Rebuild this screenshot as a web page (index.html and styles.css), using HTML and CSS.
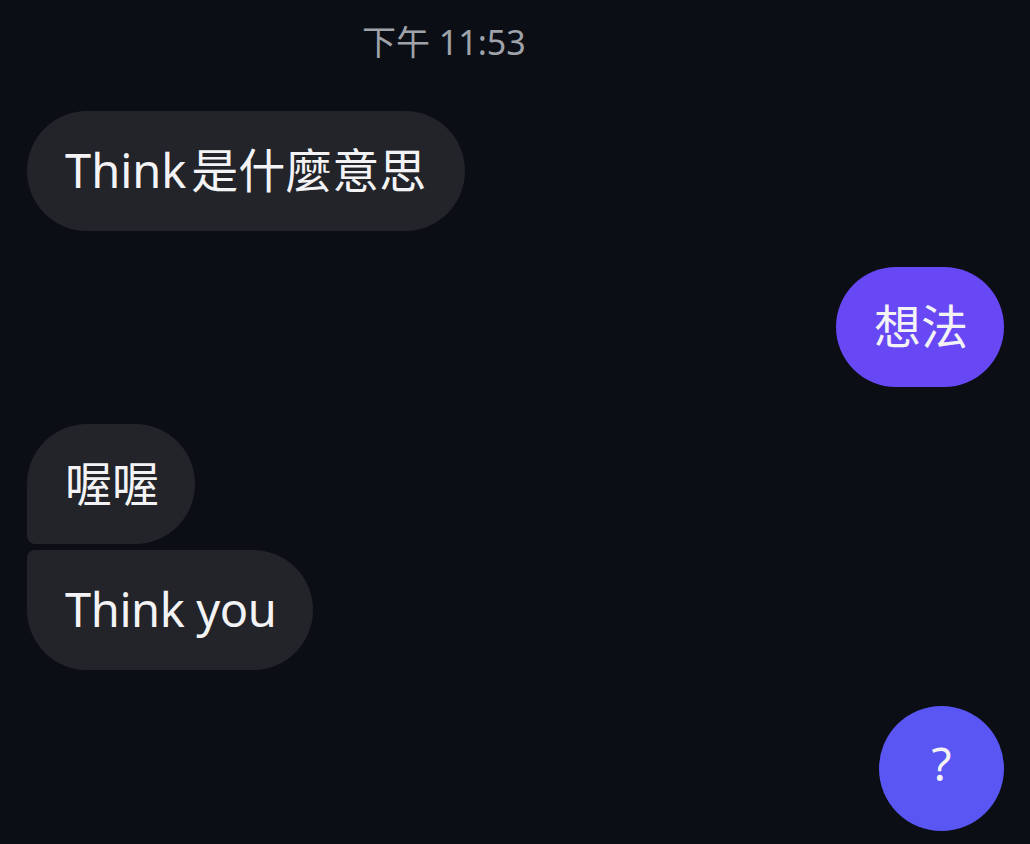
FILE: index.html
```html
<!DOCTYPE html>
<html lang="zh-Hant">
<head>
    <meta charset="UTF-8">
    <meta name="viewport" content="width=device-width, initial-scale=1.0">
    <title>Chat</title>
    <link rel="stylesheet" href="styles.css">
</head>
<body>
    <div class="chat">
        <div class="time">下午 11:53</div>

        <div class="msg in wide">Think&#8202;是什麼意思</div>

        <div class="msg out">想法</div>

        <div class="group">
            <div class="msg in first">喔喔</div>
            <div class="msg in last">Think you</div>
        </div>

        <div class="msg out ask">?</div>
    </div>
</body>
</html>
```

FILE: styles.css
```css
* {
    box-sizing: border-box;
}

body {
    margin: 0;
    height: 844px;
    overflow: hidden;
    background: #0b0e15;
    font-family: "Noto Sans", "Noto Sans CJK TC", sans-serif;
    color: #f3f3f5;
}

.chat {
    display: flex;
    flex-direction: column;
    align-items: flex-start;
    padding: 20px 26px 0 27px;
}

.time {
    padding-left: 335px;
    font-size: 34px;
    line-height: 44px;
    color: #9fa2a9;
    margin-bottom: 47px;
}

.msg {
    height: 120px;
    line-height: 118px;
    font-size: 47px;
    padding: 0 36px 0 38px;
    border-radius: 60px;
    white-space: nowrap;
}

.msg.wide {
    padding-right: 39px;
}

.msg.in {
    background: #222429;
}

.msg.out {
    align-self: flex-end;
    background: #6847f5;
    margin-top: 36px;
    margin-bottom: 37px;
}

/* grouped messages: the inner corners get small */
.group {
    display: flex;
    flex-direction: column;
    align-items: flex-start;
    gap: 6px;
}

.msg.first {
    border-bottom-left-radius: 8px;
}

.msg.last {
    border-top-left-radius: 8px;
    letter-spacing: -0.4px;
}

.msg.ask {
    width: 125px;
    height: 125px;
    padding: 0;
    border-radius: 50%;
    text-align: center;
    line-height: 114px;
    font-size: 46px;
    background: #5956f4;
}
```
